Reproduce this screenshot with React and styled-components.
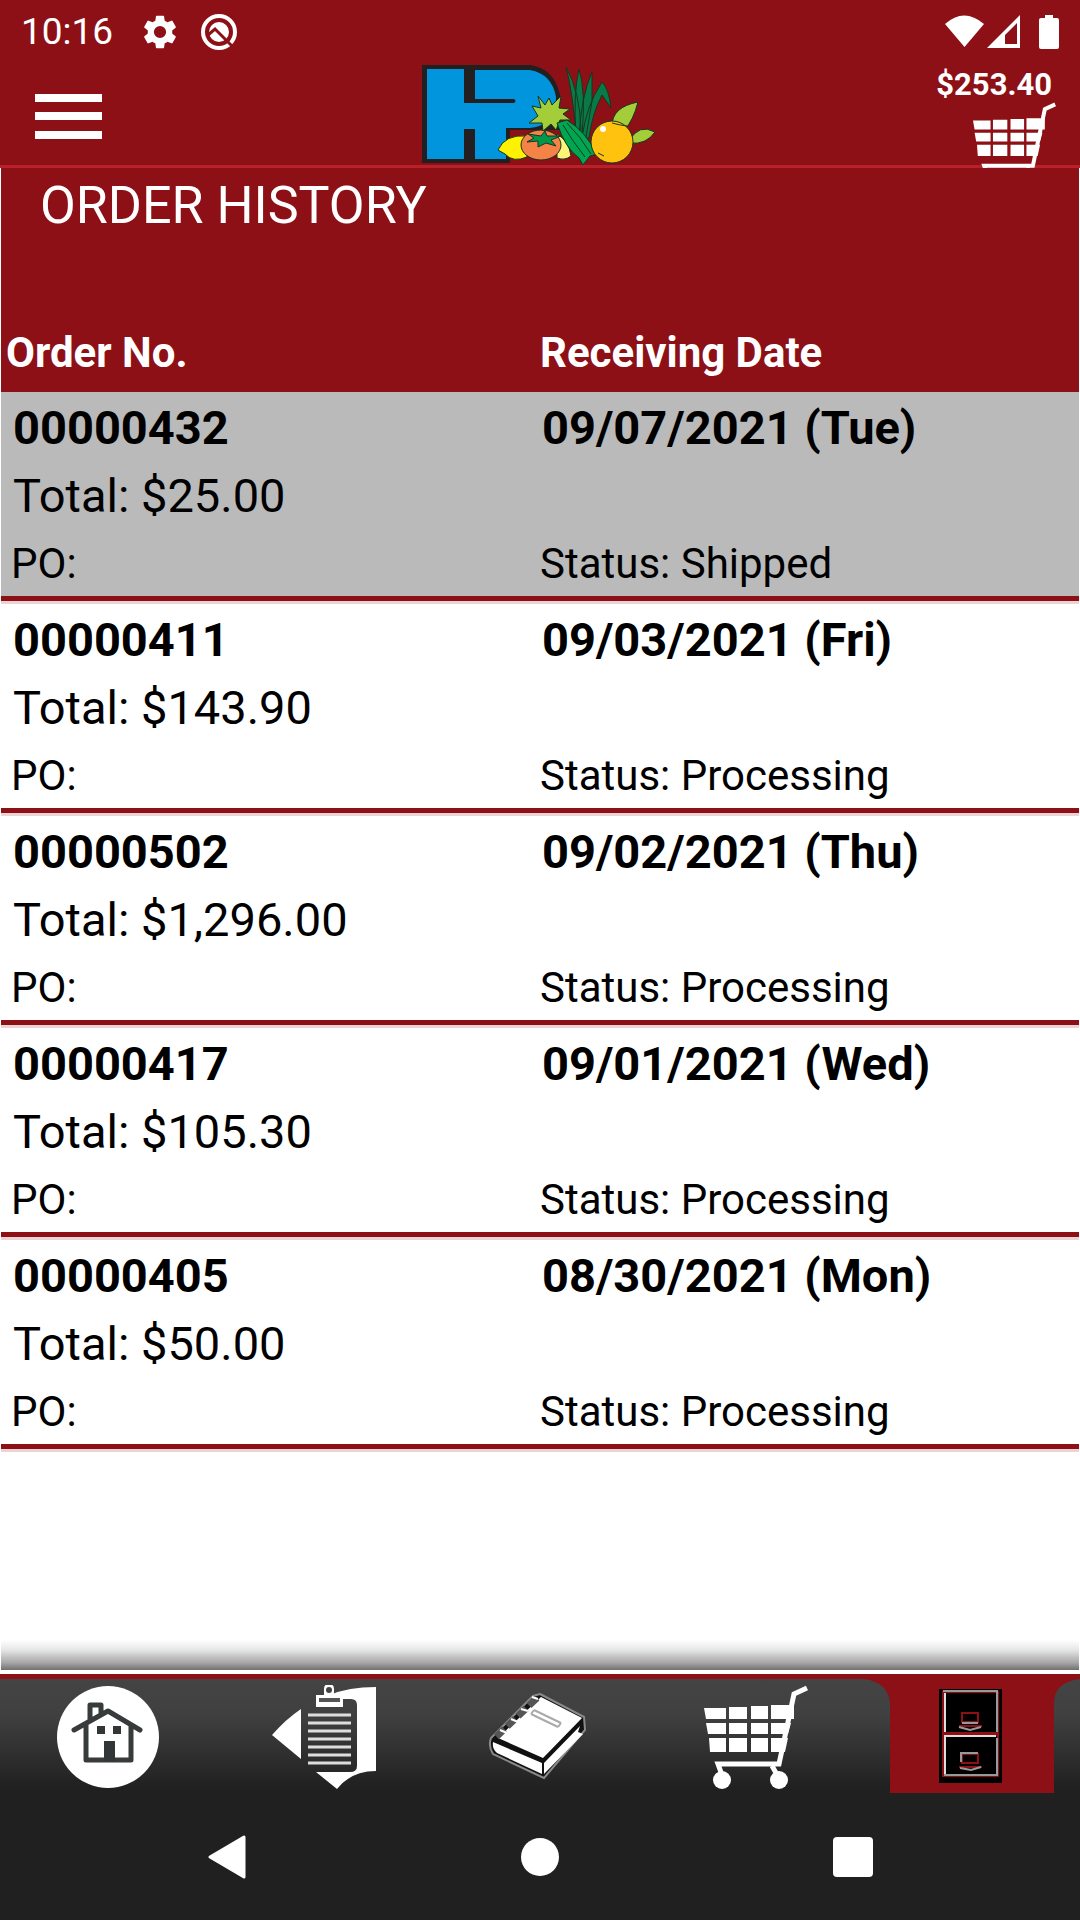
import React from "react";
import styled, { createGlobalStyle } from "styled-components";

const RED = "#8d1017";

const Global = createGlobalStyle`
  * { box-sizing: border-box; }
  body { margin: 0; background: #fff; font-family: Roboto, "Liberation Sans", sans-serif; color: #000; }
  button { font: inherit; color: inherit; border: 0; padding: 0; background: none; cursor: pointer; }
  a { color: inherit; text-decoration: none; }
  svg { display: block; flex: none; }
`;

const Screen = styled.div`
  min-height: 100vh;
  display: flex;
  flex-direction: column;
`;

const StatusBar = styled.div`
  height: 64px;
  padding: 0 20px 0 21px;
  display: flex;
  align-items: center;
  justify-content: space-between;
  background: ${RED};
  color: #fff;
  font-size: 37px;
  line-height: 46px;
`;

const StatusGroup = styled.div`
  display: flex;
  align-items: center;
  gap: ${(p) => p.$gap}px;
`;

const AppBar = styled.header`
  height: 104px;
  padding: 0 24px;
  display: grid;
  grid-template-columns: 1fr auto 1fr;
  background: ${RED};
  border-bottom: 3px solid #b8202b;
  color: #fff;
`;

const MenuButton = styled.button`
  width: 67px;
  height: 45px;
  margin: 30px 0 0 11px;
`;

const CartButton = styled.button`
  justify-self: end;
  height: 104px;
  overflow: hidden;
  display: flex;
  flex-direction: column;
  align-items: flex-end;
`;

const CartTotal = styled.span`
  padding: 4px 4px 0 0;
  font-size: 31px;
  line-height: 34px;
  font-weight: 700;
`;

const Main = styled.main`
  flex: 1;
  display: flex;
  flex-direction: column;
  padding: 0 1px;
`;

const Title = styled.h1`
  margin: 0;
  padding: 6px 0 0 39px;
  height: 154px;
  background: ${RED};
  color: #fff;
  font-size: 52px;
  line-height: 64px;
  font-weight: 400;
`;

const Orders = styled.table`
  width: 100%;
  table-layout: fixed;
  border-collapse: collapse;
`;

const Heading = styled.th`
  height: 70px;
  padding: 0 0 8px 5px;
  background: ${RED};
  color: #fff;
  font-size: 42px;
  line-height: 48px;
  font-weight: 700;
  text-align: left;
  & + & { padding-left: 0; }
`;

const OrderRow = styled.tr`
  background: ${(p) => (p.$shipped ? "#bababa" : "#fff")};
`;

const Cell = styled.td`
  height: 212px;
  padding: 0 0 0 10px;
  vertical-align: top;
  background-image: linear-gradient(to top, #ecd3d5 3px, ${RED} 3px, ${RED} 8px, transparent 8px);
  & + & { padding-left: 0; }
`;

const Line = styled.div`
  height: 68px;
  line-height: 72px;
  padding-left: ${(p) => (p.$small ? 0 : 2)}px;
  font-size: ${(p) => (p.$small ? 42 : 47)}px;
  font-weight: ${(p) => (p.$strong ? 700 : 400)};
`;

const Shade = styled.div`
  height: 30px;
  margin-top: auto;
  background: linear-gradient(#fff, #e4e4e4 35%, #a9a7a9 75%, #73716e);
`;

const Tabs = styled.nav`
  display: grid;
  grid-template-columns: repeat(5, 1fr);
  height: 125px;
  border-top: 4px solid #fff;
  background: linear-gradient(${RED} 5px, #444 5px, #404040 40px, #202020 115px);
`;

const Tab = styled.a`
  display: flex;
  align-items: center;
  justify-content: center;
  padding-top: 4px;
`;

const CabinetTab = styled(Tab)`
  align-items: flex-start;
  padding-top: 0;
`;

const SystemBar = styled.div`
  height: 125px;
  padding: 0 70px 2px;
  display: grid;
  grid-template-columns: repeat(3, 1fr);
  background: #202020;
`;

const SystemButton = styled.button`
  display: flex;
  align-items: center;
  justify-content: center;
`;

const orders = [
  { no: "00000432", total: "$25.00", date: "09/07/2021 (Tue)", status: "Shipped" },
  { no: "00000411", total: "$143.90", date: "09/03/2021 (Fri)", status: "Processing" },
  { no: "00000502", total: "$1,296.00", date: "09/02/2021 (Thu)", status: "Processing" },
  { no: "00000417", total: "$105.30", date: "09/01/2021 (Wed)", status: "Processing" },
  { no: "00000405", total: "$50.00", date: "08/30/2021 (Mon)", status: "Processing" },
];

const Gear = () => (
  <svg width="34" height="34" viewBox="2 2 20 20" fill="#fff">
    <path d="M19.14 12.94c.04-.3.06-.61.06-.94 0-.32-.02-.64-.07-.94l2.03-1.58a.49.49 0 0 0 .12-.61l-1.92-3.32a.49.49 0 0 0-.59-.22l-2.39.96c-.5-.38-1.03-.7-1.62-.94l-.36-2.54a.48.48 0 0 0-.48-.41h-3.84c-.24 0-.43.17-.47.41l-.36 2.54c-.59.24-1.13.57-1.62.94l-2.39-.96a.48.48 0 0 0-.59.22L2.74 8.87c-.12.21-.08.47.12.61l2.03 1.58c-.05.3-.09.63-.09.94s.02.64.07.94l-2.03 1.58a.49.49 0 0 0-.12.61l1.92 3.32c.12.22.37.29.59.22l2.39-.96c.5.38 1.03.7 1.62.94l.36 2.54c.05.24.24.41.48.41h3.84c.24 0 .44-.17.47-.41l.36-2.54c.59-.24 1.13-.56 1.62-.94l2.39.96c.22.08.47 0 .59-.22l1.92-3.32a.48.48 0 0 0-.12-.61zM12 15.6a3.6 3.6 0 1 1 0-7.2 3.6 3.6 0 0 1 0 7.2z" />
  </svg>
);

const Badge = () => (
  <svg width="36" height="36" viewBox="0 0 36 36">
    <circle cx="18" cy="18" r="16" fill="none" stroke="#fff" strokeWidth="4" />
    <circle cx="18" cy="18" r="10" fill="#fff" />
    <path d="M7 21L14 15L31 32" fill="none" stroke={RED} strokeWidth="3" />
  </svg>
);

const Signals = () => (
  <svg width="115" height="36" viewBox="0 0 115 36" fill="#fff">
    <path d="M0 10Q19-7 39 10L19.500 33z" />
    <path fillRule="evenodd" d="M42 34L75 1V34zM60 30H72V9L60 21z" />
    <path d="M100 1h8v3h4q2 0 2 2v27q0 2-2 2H96q-2 0-2-2V6q0-2 2-2h4z" />
  </svg>
);

const Cart = ({ width, height }) => (
  <svg width={width} height={height} viewBox="0 0 104 104" fill="#fff" preserveAspectRatio="none">
    <path d="M0 23h22v11H2zM25 22h18v12H25zM47 21h17v13H47zM67 20h23v14H67zM2 38h20v11H4zM25 38h18v11H25zM47 38h17v11H47zM67 38h20l-3 11H67zM5 53h17v14H6zM25 53h18v14H25zM47 53h17v14H47zM67 53h17l-3 14H67z" />
    <path d="M103 3L90 9L75 79H14L18 90M68 81l7 12" fill="none" stroke="#fff" strokeWidth="5" />
    <circle cx="18" cy="95" r="9" />
    <circle cx="75" cy="95" r="9" />
  </svg>
);

const Logo = () => (
  <svg width="236" height="101" viewBox="0 0 236 101" role="img" aria-label="HP produce">
    <path d="M0 1H108Q132 4 138 31V66H88V99H0z" fill="#231f20" />
    <path d="M5 5H42V39H92Q95 37 92 35H53V6H108Q130 10 134 33Q134 62 108 64H84V95H53V65H42V95H5z" fill="#0095dc" />
    <path d="M43 65H52V95H43z" fill="#231f20" />
    <path d="M88 68H140V100H88z" fill={RED} />
    <g stroke="#17351e" strokeWidth="1">
      <path d="M144 3Q158 28 159 66L154 71Q151 30 144 3zM157 5Q164 28 160 71H154Q151 31 157 5zM170 8L170 37L164 73H157Q159 33 170 8zM180 18Q187 25 189 44L180 31Q170 50 167 74H160Q164 42 180 18z" fill="#087a48" />
      <path d="M190 62Q190 43 216 38Q211 57 203 65zM207 77Q217 59 233 68Q224 81 208 79z" fill="#a3ce3a" />
      <path d="M76 86Q83 70 105 72V93Q91 99 83 90z" fill="#fff200" />
      <path d="M135 70Q147 77 149 92Q143 97 135 94z" fill="#fff47a" />
      <ellipse cx="119" cy="81" rx="20" ry="15" fill="#f58347" />
      <path d="M116 32L123 41L127 34L130 41L139 32L137 44L148 45L141 50L149 56L138 56L134 66L129 60L121 67L120 59L107 59L116 52L110 42L119 44z" fill="#a3ce3a" />
      <path d="M106 70L119 72L123 67L125 72L139 72L129 76L134 82L124 79L116 83L116 77L105 78L112 74z" fill="#00984d" />
      <path d="M135 59L145 56Q163 67 175 90L168 92L161 101L157 94Q143 84 135 59z" fill="#00a652" />
      <path d="M141 61Q151 78 163 93M145 59Q159 73 169 90" fill="none" />
      <circle cx="190" cy="78" r="21" fill="#ffc20e" />
      <path d="M190 59Q197 61 205 62M176 89l6 3" fill="none" />
    </g>
    <circle cx="181" cy="65" r="3" fill="#fff" />
  </svg>
);

const Home = () => (
  <svg width="104" height="104" viewBox="0 0 104 104">
    <circle cx="52" cy="52" r="51" fill="#fff" />
    <g fill="none" stroke="#383b3b" strokeWidth="5" strokeLinecap="round" strokeLinejoin="round">
      <path d="M18 45L52 26L84 45M30 40V75H75V40M34 34V20H45V28" />
    </g>
    <path d="M41 41h8v8h-8zM57 41h8v8h-8zM48 56h11v20H48z" fill="#333636" />
  </svg>
);

const Clipboard = () => (
  <svg width="105" height="104" viewBox="0 0 105 104" fill="#fff">
    <path d="M0 50Q14 34 29 24V74zM58 10Q76 2 104 2V86Q79 86 65 104L44 87H78Q85 87 85 81V20Q85 14 79 14H58z" />
    <path d="M44 10h8V4q0-5 5-5t5 5v6h9v12H44z" />
    <circle cx="57" cy="5" r="3" fill="#444" />
    <path d="M47 13h21v4H47z" fill="#555" />
    <path d="M36 30H79M36 38H79M36 46H79M36 54H79M36 62H79M36 70H79M36 78H79" stroke="#ddd" strokeWidth="3" />
  </svg>
);

const Book = () => (
  <svg width="104" height="90" viewBox="0 0 104 90">
    <path d="M52 2L96 25L97 38L56 86L5 62Q0 54 3 46L45 4z" fill="#111" stroke="#8a8a8a" strokeWidth="2" />
    <path d="M53 5L94 26L55 66L10 46z" fill="#fff" />
    <path d="M5 50L54 71V82L9 61Q4 57 5 50zM56 71L92 34L90 40L95 42L56 82z" fill="#fff" />
    <path d="M49 6L7 46" stroke="#555" strokeWidth="7" strokeDasharray="11 4" />
    <path d="M44 5L50 7M33 17L40 19M23 27L30 30M12 38L19 41" stroke="#fff" strokeWidth="2" />
    <path d="M46 18L73 31M43 22L70 35M46 18L43 22M73 31L70 35" stroke="#aaa" strokeWidth="2" />
  </svg>
);

const Cabinet = () => (
  <svg width="216" height="120" viewBox="0 0 216 120">
    <path d="M0 0H216V5Q190 8 190 29V119H26V29Q24 8 0 5z" fill={RED} />
    <path d="M75 15h63v94H75z" fill="#000" />
    <g fill="none" stroke={RED} strokeWidth="2">
      <path d="M79 18H134V59H79zM79 61H134V102H79zM98 39H114V48H98zM95 52H118M98 80H114V89H98zM95 93H118" />
    </g>
    <path d="M81 19V58M81 102V62H132" fill="none" stroke="#ddd" strokeWidth="2" />
    <path d="M79 17H133V58M133 64V101H80M98 49H114M97 88V79H114M95 53L106 56L117 53M96 94L107 96L117 93" fill="none" stroke="#999" strokeWidth="2" />
  </svg>
);

export default function App() {
  return (
    <Screen>
      <Global />
      <StatusBar>
        <StatusGroup $gap={24}>
          <StatusGroup $gap={30}>
            <span>10:16</span>
            <Gear />
          </StatusGroup>
          <Badge />
        </StatusGroup>
        <Signals />
      </StatusBar>
      <AppBar>
        <MenuButton aria-label="Menu">
          <svg width="67" height="45" viewBox="0 0 67 45" fill="#fff">
            <path d="M0 0H67V8H0zM0 18H67V26H0zM0 37H67V45H0z" />
          </svg>
        </MenuButton>
        <Logo />
        <CartButton aria-label="Cart, $253.40">
          <CartTotal>$253.40</CartTotal>
          <Cart width={83} height={84} />
        </CartButton>
      </AppBar>
      <Main>
        <Title>ORDER HISTORY</Title>
        <Orders>
          <thead>
            <tr>
              <Heading scope="col">Order No.</Heading>
              <Heading scope="col">Receiving Date</Heading>
            </tr>
          </thead>
          <tbody>
            {orders.map((o) => (
              <OrderRow key={o.no} $shipped={o.status === "Shipped"}>
                <Cell>
                  <Line $strong>{o.no}</Line>
                  <Line>Total: {o.total}</Line>
                  <Line $small>PO:</Line>
                </Cell>
                <Cell>
                  <Line $strong>{o.date}</Line>
                  <Line />
                  <Line $small>Status: {o.status}</Line>
                </Cell>
              </OrderRow>
            ))}
          </tbody>
        </Orders>
        <Shade />
      </Main>
      <Tabs aria-label="Main">
        <Tab href="#home" aria-label="Home"><Home /></Tab>
        <Tab href="#guide" aria-label="Order guide"><Clipboard /></Tab>
        <Tab href="#catalog" aria-label="Catalog"><Book /></Tab>
        <Tab href="#cart" aria-label="Cart"><Cart width={104} height={104} /></Tab>
        <CabinetTab href="#history" aria-label="Order history" aria-current="page"><Cabinet /></CabinetTab>
      </Tabs>
      <SystemBar>
        <SystemButton aria-label="Back">
          <svg width="38" height="44" viewBox="0 0 38 44"><path d="M2 22L36 2V42z" fill="#fff" stroke="#fff" strokeWidth="3" strokeLinejoin="round" /></svg>
        </SystemButton>
        <SystemButton aria-label="Home screen">
          <svg width="40" height="40"><circle cx="20" cy="20" r="19" fill="#fff" /></svg>
        </SystemButton>
        <SystemButton aria-label="Recent apps">
          <svg width="40" height="40"><rect width="40" height="40" rx="4" fill="#fff" /></svg>
        </SystemButton>
      </SystemBar>
    </Screen>
  );
}
